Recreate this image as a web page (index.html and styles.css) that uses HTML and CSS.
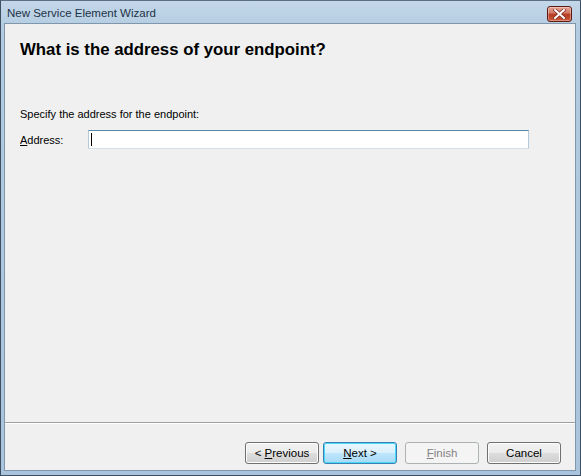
FILE: index.html
```html
<!DOCTYPE html>
<html>
<head>
    <title>New Service Element Wizard</title>
    <meta charset="UTF-8">
    <link rel="stylesheet" href="styles.css">
</head>
<body>
    <div class="window">
        <div class="titlebar">
            <span class="title">New Service Element Wizard</span>
            <button class="close" title="Close">
                <svg width="13" height="10" viewBox="0 0 13 10">
                    <path d="M2 1 L11 9 M11 1 L2 9" stroke="#7a2a1e" stroke-width="3.4" stroke-linecap="square"/>
                    <path d="M2 1 L11 9 M11 1 L2 9" stroke="#fff" stroke-width="2" stroke-linecap="square"/>
                </svg>
            </button>
        </div>
        <div class="client">
            <div class="page">
                <h1>What is the address of your endpoint?</h1>
                <p class="hint">Specify the address for the endpoint:</p>
                <div class="field">
                    <label for="address"><u>A</u>ddress:</label>
                    <span class="input-wrap">
                        <input type="text" id="address">
                        <span class="caret"></span>
                    </span>
                </div>
            </div>
            <div class="footer">
                <div class="nav">
                    <button class="btn"><span>&lt; <u>P</u>revious</span></button>
                    <button class="btn default"><span><u>N</u>ext &gt;</span></button>
                </div>
                <button class="btn" disabled><span><u>F</u>inish</span></button>
                <button class="btn"><span>Cancel</span></button>
            </div>
        </div>
    </div>
</body>
</html>
```

FILE: styles.css
```css
html, body {
    margin: 0;
    padding: 0;
}
body {
    font-family: "Liberation Sans", Arial, sans-serif;
    font-size: 11px;
    color: #000;
    background: #fff;
}
.window {
    width: 581px;
    height: 476px;
    box-sizing: border-box;
    display: flex;
    flex-direction: column;
    border: 1px solid #3c4f63;
    border-top-color: #5a7087;
    background: linear-gradient(to bottom, #c3d7e9, #b2cbe0 30px, #a9c4dc);
    padding: 0 4px 4px 3px;
}
.titlebar {
    height: 22px;
    display: flex;
    align-items: center;
    justify-content: space-between;
    flex: none;
}
.title {
    font-size: 11.5px;
    color: #1e3246;
    padding: 0 0 0 3px;
    margin-top: 2px;
}
.close {
    width: 25px;
    height: 16px;
    margin: 3px 4px 0 0;
    padding: 0;
    border: 1px solid #5e1a10;
    border-radius: 3px;
    background: linear-gradient(to bottom, #e8a595 0%, #d0735f 45%, #b63920 50%, #c95a3a 100%);
    display: flex;
    align-items: center;
    justify-content: center;
    box-shadow: inset 0 0 0 1px rgba(255, 255, 255, 0.35);
}
.client {
    flex: 1;
    display: flex;
    flex-direction: column;
    background: #f0f0f0;
    border: 1px solid #8096ad;
}
.page {
    flex: 1;
    padding: 0 0 0 15px;
}
h1 {
    font-size: 16.8px;
    font-weight: 700;
    margin: 16px 0 0;
    line-height: 20px;
}
.hint {
    margin: 47px 0 0;
    line-height: 14px;
}
.field {
    display: flex;
    align-items: center;
    margin-top: 9px;
}
.field label {
    width: 68px;
}
.input-wrap {
    position: relative;
    display: block;
}
.field input {
    display: block;
    width: 441px;
    height: 19px;
    box-sizing: border-box;
    margin: 0;
    padding: 0 2px;
    border: 1px solid #abadb3;
    border-top-color: #5b87a8;
    border-left-color: #b5cadb;
    border-right-color: #b5cadb;
    border-bottom-color: #d5e1ea;
    background: #fff;
    font-family: "Liberation Sans", Arial, sans-serif;
    font-size: 11px;
    outline: none;
}
.caret {
    position: absolute;
    left: 3px;
    top: 3px;
    width: 1px;
    height: 13px;
    background: #000;
}
.footer {
    flex: none;
    height: 48px;
    border-top: 1px solid #a0a0a0;
    box-shadow: inset 0 1px 0 #fff;
    display: flex;
    align-items: flex-start;
    justify-content: flex-end;
    gap: 8px;
    padding: 19px 14px 0 0;
    box-sizing: border-box;
}
.nav {
    display: flex;
    gap: 4px;
}
.btn {
    width: 74px;
    height: 22px;
    padding: 0;
    border: 1px solid #707070;
    border-radius: 3px;
    background: linear-gradient(to bottom, #f2f2f2 0%, #ebebeb 50%, #dddddd 51%, #cfcfcf 100%);
    box-shadow: inset 0 0 0 1px #fcfcfc;
    font-family: "Liberation Sans", Arial, sans-serif;
    font-size: 11.5px;
    color: #000;
}
.btn.default {
    border-color: #3c7fb1;
    background: linear-gradient(to bottom, #eaf6fd 0%, #d9f0fc 50%, #bee6fd 51%, #a7d9f5 100%);
    box-shadow: inset 0 0 0 1px #48d8fb;
}
.btn:disabled {
    border-color: #adb2b5;
    background: #f4f4f4;
    box-shadow: none;
    color: #838383;
}
```
